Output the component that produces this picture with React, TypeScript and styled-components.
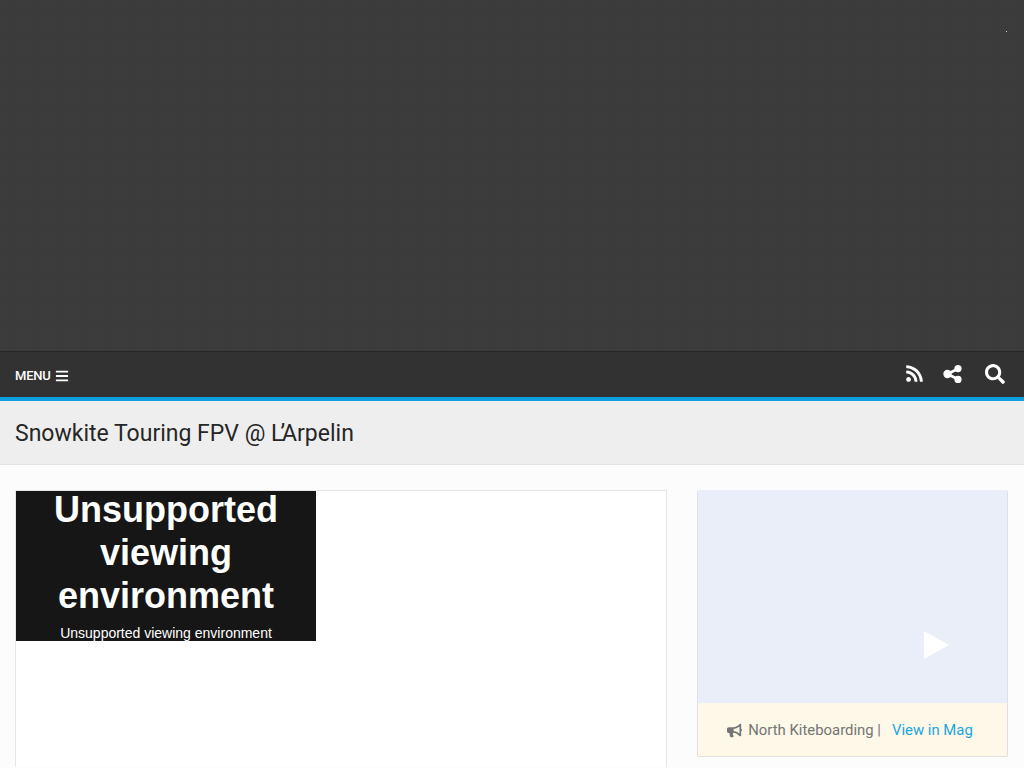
import styled, { createGlobalStyle } from "styled-components";
import { FaBars, FaBullhorn, FaRss, FaSearch } from "react-icons/fa";

const GlobalStyle = createGlobalStyle`
    html, body {
        margin: 0;
        padding: 0;
        height: 768px;
        overflow: hidden;
        background: #fcfcfc;
        font-family: Roboto, "Liberation Sans", sans-serif;
    }
`;

const App = () => {
    return (
        <>
            <GlobalStyle />
            <Hero>
                <HeroDot />
            </Hero>
            <NavBar>
                <MenuButton>
                    MENU <FaBars size={14} />
                </MenuButton>
                <NavIcons>
                    <FaRss size={19} />
                    <ShareIcon viewBox="0 0 19 18">
                        <path d="M4.5 9 L14.5 4 M4.5 9 L14.5 14" stroke="#ffffff" strokeWidth="2.6" fill="none" />
                        <circle cx="4.5" cy="9" r="4.2" fill="#ffffff" />
                        <circle cx="15" cy="3.6" r="3.6" fill="#ffffff" />
                        <circle cx="15" cy="14.4" r="3.6" fill="#ffffff" />
                    </ShareIcon>
                    <FaSearch size={20} />
                </NavIcons>
            </NavBar>
            <TitleBand>
                <Title>
                    Snowkite Touring FPV @ <Elided>L’</Elided>Arpelin
                </Title>
            </TitleBand>
            <Body>
                <MainCard>
                    <Player>
                        <PlayerHeading>Unsupported viewing environment</PlayerHeading>
                        <PlayerNote>Unsupported viewing environment</PlayerNote>
                    </Player>
                </MainCard>
                <AdCard>
                    <AdMedia>
                        <PlayIcon viewBox="0 0 25 28">
                            <polygon points="0,0 25,14 0,28" fill="#ffffff" />
                        </PlayIcon>
                    </AdMedia>
                    <AdFooter>
                        <FaBullhorn size={15} />
                        <Sponsor>North Kiteboarding |</Sponsor>
                        <MagLink>View in Mag</MagLink>
                    </AdFooter>
                </AdCard>
            </Body>
        </>
    );
};

export default App;

const Hero = styled.div`
    position: relative;
    height: 351px;
    background-color: #3b3b3b;
    background-image: radial-gradient(#3f3f3f 0.5px, transparent 0.6px);
    background-size: 3px 3px;
`;

const HeroDot = styled.span`
    position: absolute;
    top: 31px;
    left: 1006px;
    width: 1px;
    height: 1px;
    background: #d8d8d8;
`;

const NavBar = styled.nav`
    height: 45px;
    display: flex;
    align-items: center;
    justify-content: space-between;
    padding: 0 19px 0 15px;
    background: #323232;
    border-top: 1px solid #252525;
    border-bottom: 4px solid #0f9fe0;
    color: #ffffff;
`;

const MenuButton = styled.div`
    display: flex;
    align-items: center;
    gap: 4px;
    margin-top: 2px;
    font-size: 13px;
    font-weight: 500;
    letter-spacing: -0.2px;
`;

const NavIcons = styled.div`
    display: flex;
    align-items: center;
    gap: 21px;
    margin-bottom: 2px;
`;

const ShareIcon = styled.svg`
    width: 19px;
    height: 18px;
    margin: 0 2px 0 -2px;
`;

const TitleBand = styled.div`
    height: 61px;
    display: flex;
    align-items: center;
    padding: 2px 15px 0;
    background: #eeeeef;
    border-bottom: 1px solid #e2e2e2;
`;

const Title = styled.h1`
    margin: 0;
    font-size: 23px;
    font-weight: 400;
    color: #262626;
`;

const Elided = styled.span`
    letter-spacing: -3px;
`;

const Body = styled.div`
    display: flex;
    align-items: flex-start;
    gap: 30px;
    padding: 25px 16px 0 15px;
`;

const MainCard = styled.div`
    box-sizing: border-box;
    width: 652px;
    height: 277px;
    background: #ffffff;
    border: 1px solid #e6e6e6;
    border-bottom: 0;
`;

const Player = styled.div`
    display: flow-root;
    width: 300px;
    height: 150px;
    background: #161616;
    color: #ffffff;
    text-align: center;
    font-family: "Liberation Sans", Arial, sans-serif;
`;

const PlayerHeading = styled.div`
    font-size: 36px;
    font-weight: 700;
    line-height: 43px;
    margin-top: -3px;
    padding: 0 20px;
`;

const PlayerNote = styled.div`
    font-size: 14px;
    line-height: 16px;
    margin-top: 8px;
`;

const AdCard = styled.div`
    width: 311px;
    box-sizing: border-box;
    border: 1px solid #e0e0e0;
    border-top: 0;
    border-radius: 2px;
    overflow: hidden;
`;

const AdMedia = styled.div`
    height: 213px;
    display: flex;
    align-items: flex-end;
    justify-content: flex-end;
    padding: 0 58px 44px 0;
    box-sizing: border-box;
    background: #eaeef9;
`;

const PlayIcon = styled.svg`
    width: 25px;
    height: 28px;
`;

const AdFooter = styled.div`
    height: 52px;
    padding: 1px 5px 0 0;
    display: flex;
    align-items: center;
    justify-content: center;
    gap: 6px;
    background: #fdf8e8;
    color: #757575;
    font-size: 14.88px;
`;

const Sponsor = styled.span`
    margin-right: 5px;
`;

const MagLink = styled.span`
    color: #1ba6e0;
`;
